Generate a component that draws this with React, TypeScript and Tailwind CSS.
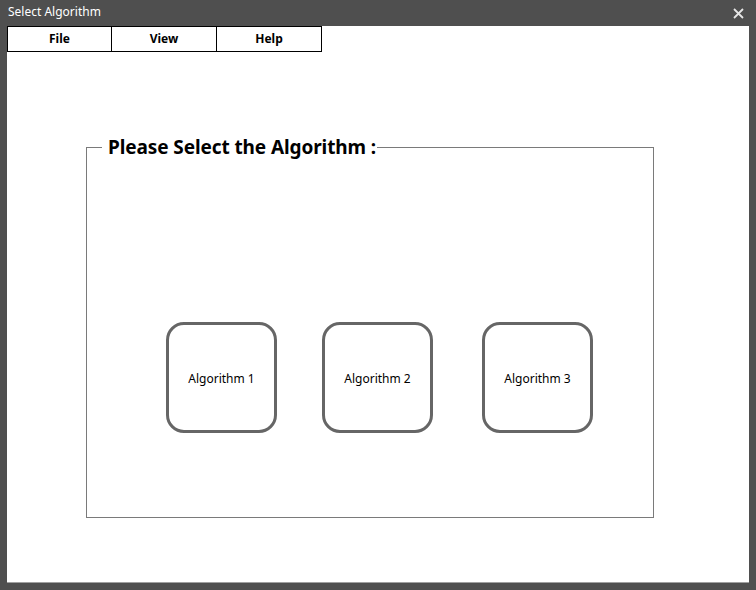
import React from "react";

export default function App() {
  const font = { fontFamily: '"Noto Sans", "Open Sans", sans-serif' };
  const menus = [
    { m: "File", w: "w-[105px]" },
    { m: "View", w: "w-[106px] -ml-px" },
    { m: "Help", w: "w-[106px] -ml-px" },
  ];
  return (
    <div className="w-[756px] h-[590px] bg-[#4f4f4f] flex flex-col" style={font}>
      <div className="h-[26px] flex items-center justify-between pl-[8px] pr-[12px]">
        <span className="text-white text-[12px] leading-none -mt-[2px]">Select Algorithm</span>
        <svg width="11" height="11" viewBox="0 0 11 11" className="mt-[1px]">
          <path d="M1 1L10 10M10 1L1 10" stroke="#e6e6e6" strokeWidth="1.8" />
        </svg>
      </div>
      <div className="flex-1 ml-[7px] mr-[7px] mb-[7px] bg-white border-b border-[#a0a0a0] flex flex-col">
        <div className="flex">
          {menus.map(({ m, w }) => (
            <div
              key={m}
              className={`h-[26px] ${w} border border-black flex items-center justify-center text-[12px] font-bold text-black`}
            >
              {m}
            </div>
          ))}
        </div>
        <fieldset className="ml-[79px] mt-[83px] w-[568px] h-[383px] border border-[#7a7a7a] px-0">
          <legend className="ml-[15px] pl-[6px] pr-[1px] text-[19px] tracking-[-0.1px] font-bold text-black leading-[24px]">
            Please Select the Algorithm :
          </legend>
          <div className="flex mt-[163px] ml-[79px]">
            {["Algorithm 1", "Algorithm 2", "Algorithm 3"].map((a, i) => (
              <div
                key={a}
                className={`w-[111px] h-[111px] pt-[3px] border-[3px] border-[#666666] rounded-[18px] flex items-center justify-center text-[12px] text-black ${i === 1 ? "ml-[45px]" : i === 2 ? "ml-[49px]" : ""}`}
              >
                {a}
              </div>
            ))}
          </div>
        </fieldset>
      </div>
    </div>
  );
}
